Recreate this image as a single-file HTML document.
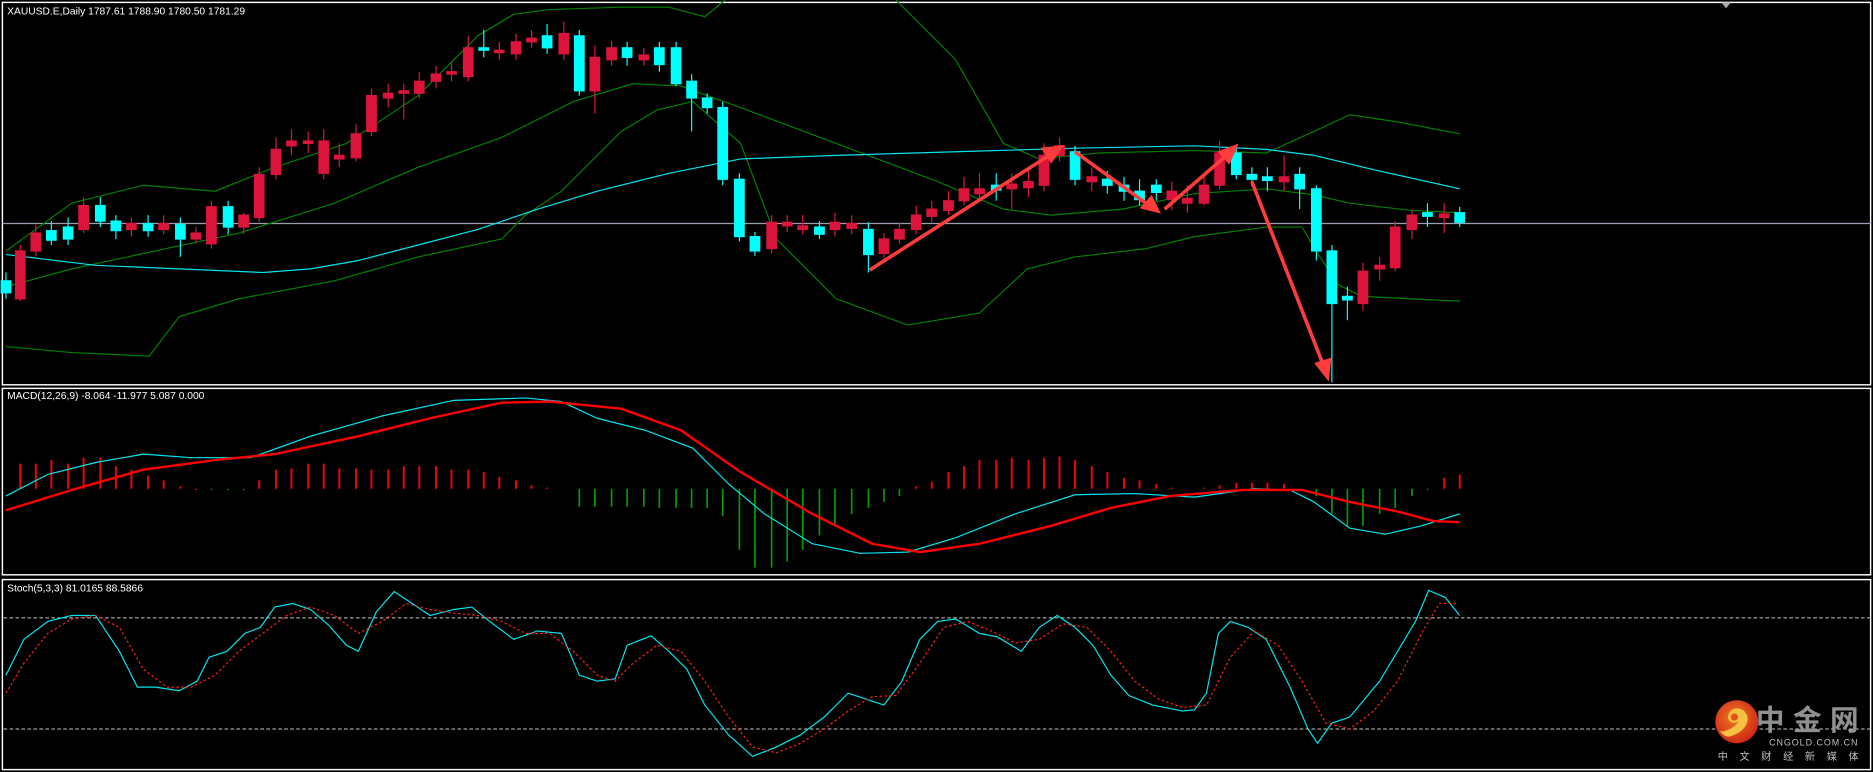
<!DOCTYPE html>
<html><head><meta charset="utf-8"><style>
html,body{margin:0;padding:0;background:#000;width:1873px;height:772px;overflow:hidden}
svg{display:block}
text{font-family:"Liberation Sans","Noto Sans CJK SC",sans-serif}
</style></head><body>
<svg width="1873" height="772" viewBox="0 0 1568 646" preserveAspectRatio="none" xmlns="http://www.w3.org/2000/svg">
<rect width="1568" height="646" fill="#000"/>
<!-- panel borders -->
<g fill="none" stroke="#fff" stroke-width="1.2">
<rect x="2" y="2" width="1564" height="320"/>
<rect x="2" y="325" width="1564" height="156"/>
<rect x="2" y="485" width="1564" height="159"/>
</g>
<path d="M1441 2 L1449 2 L1445 7Z" fill="#aaa"/>
<text x="6" y="12" font-size="8.6" fill="#fff">XAUUSD.E,Daily  1787.61 1788.90 1780.50 1781.29</text>
<!-- gray line -->
<line x1="2" y1="187" x2="1566" y2="187" stroke="#9aa0b0" stroke-width="1"/>
<!-- bollinger -->
<g fill="none" stroke="#008000" stroke-width="1">
<path d="M5 210 L60 170 L120 155 L180 160 L230 140 L290 120 L350 80 L400 30 L430 12 L460 8 L520 6 L560 6 L590 14 L607 0"/>
<path d="M750 0 L800 50 L840 120 L870 133 L920 128 L1000 126 L1060 128 L1100 110 L1130 96 L1170 102 L1222 112"/>
<path d="M5 240 L60 225 L130 210 L200 195 L280 170 L350 140 L420 115 L480 85 L530 70 L570 72 L620 90 L700 120 L780 150 L840 175 L880 180 L940 175 L1000 162 L1060 158 L1100 163 L1130 170 L1180 176 L1222 178"/>
<path d="M5 290 L60 295 L125 298 L150 265 L200 250 L280 235 L350 215 L420 200 L440 180 L470 160 L520 110 L550 92 L580 85 L620 120 L650 200 L700 250 L760 272 L820 262 L860 225 L900 215 L960 208 L1000 198 L1060 190 L1090 190 L1105 215 L1120 238 L1140 248 L1222 252"/>
</g>
<path d="M5 213 L80 222 L150 225 L220 228 L260 225 L300 218 L350 205 L400 192 L450 175 L500 160 L560 145 L620 133 L700 130 L800 127 L900 124 L1000 122 L1060 125 L1100 130 L1150 142 L1222 158" fill="none" stroke="#00e5ee" stroke-width="1"/>
<!-- candles -->
<g id="c"></g>
<g stroke-width="1">
<g stroke="#00ffff" fill="#00ffff">
<path d="M5 228V250M43 185V205M57 182V205M84 165V190M97 180V200M124 180V198M151 182V215M191 168V196M405 25V48M458 20V45M485 25V80M525 35V55M552 35V60M566 35V72M579 62V110M592 78V95M605 85V155M619 145V202M632 194V214M686 185V200M727 186V228M834 145V168M900 122V155M927 143V162M941 148V168M954 150V172M968 150V168M1035 122V150M1048 140V156M1061 140V160M1088 140V175M1102 155V218M1115 205V320M1128 240V268M1195 170V190M1222 173V190"/>
<rect x="1" y="235" width="8" height="10"/><rect x="39" y="193" width="8" height="8"/><rect x="53" y="190" width="8" height="10"/><rect x="80" y="172" width="8" height="13"/><rect x="93" y="185" width="8" height="8"/><rect x="120" y="187" width="8" height="6"/><rect x="147" y="188" width="8" height="12"/><rect x="187" y="173" width="8" height="17"/><rect x="401" y="40" width="8" height="2"/><rect x="454" y="30" width="8" height="10"/><rect x="481" y="30" width="8" height="46"/><rect x="521" y="40" width="8" height="8"/><rect x="548" y="40" width="8" height="14"/><rect x="562" y="40" width="8" height="30"/><rect x="575" y="68" width="8" height="14"/><rect x="588" y="82" width="8" height="8"/><rect x="601" y="90" width="8" height="60"/><rect x="615" y="150" width="8" height="48"/><rect x="628" y="198" width="8" height="12"/><rect x="682" y="190" width="8" height="6"/><rect x="723" y="192" width="8" height="21"/><rect x="830" y="155" width="8" height="4"/><rect x="896" y="127" width="8" height="23"/><rect x="923" y="150" width="8" height="5"/><rect x="937" y="155" width="8" height="5"/><rect x="950" y="160" width="8" height="7"/><rect x="964" y="155" width="8" height="6"/><rect x="1031" y="128" width="8" height="18"/><rect x="1044" y="146" width="8" height="4"/><rect x="1057" y="148" width="8" height="3"/><rect x="1084" y="146" width="8" height="12"/><rect x="1098" y="158" width="8" height="52"/><rect x="1111" y="210" width="8" height="44"/><rect x="1124" y="248" width="8" height="3"/><rect x="1191" y="178" width="8" height="3"/><rect x="1218" y="178" width="8" height="8"/>
</g>
<g stroke="#dc143c" fill="#dc143c">
<path d="M17 205V252M30 188V214M70 165V195M110 182V198M137 180V196M164 190V204M177 168V208M204 178V196M217 140V186M231 115V150M244 108V130M258 110V128M271 108V150M284 120V140M298 104V135M311 74V114M325 70V90M338 70V100M351 60V82M365 55V74M378 52V68M392 30V68M418 35V50M432 28V50M445 25V40M472 18V50M498 38V95M512 34V55M539 40V55M646 180V212M659 180V194M672 180V196M699 178V198M713 180V196M740 195V216M753 186V204M767 172V196M780 168V186M794 160V180M807 148V172M820 145V166M847 145V175M861 140V165M874 120V160M887 115V135M914 140V160M981 152V176M994 155V178M1008 145V172M1021 118V158M1075 130V160M1141 220V260M1155 215V235M1168 185V227M1182 175V200M1209 170V195"/>
<rect x="13" y="210" width="8" height="40"/><rect x="26" y="195" width="8" height="15"/><rect x="66" y="172" width="8" height="20"/><rect x="106" y="187" width="8" height="5"/><rect x="133" y="187" width="8" height="5"/><rect x="160" y="195" width="8" height="5"/><rect x="173" y="173" width="8" height="31"/><rect x="200" y="180" width="8" height="10"/><rect x="213" y="146" width="8" height="36"/><rect x="227" y="125" width="8" height="21"/><rect x="240" y="118" width="8" height="4"/><rect x="254" y="118" width="8" height="2"/><rect x="267" y="118" width="8" height="27"/><rect x="280" y="130" width="8" height="3"/><rect x="294" y="112" width="8" height="20"/><rect x="307" y="80" width="8" height="30"/><rect x="321" y="78" width="8" height="4"/><rect x="334" y="76" width="8" height="2"/><rect x="347" y="68" width="8" height="10"/><rect x="361" y="62" width="8" height="6"/><rect x="374" y="60" width="8" height="2"/><rect x="388" y="40" width="8" height="24"/><rect x="414" y="42" width="8" height="2"/><rect x="428" y="35" width="8" height="10"/><rect x="441" y="32" width="8" height="3"/><rect x="468" y="28" width="8" height="17"/><rect x="494" y="48" width="8" height="28"/><rect x="508" y="40" width="8" height="10"/><rect x="535" y="46" width="8" height="4"/><rect x="642" y="186" width="8" height="22"/><rect x="655" y="186" width="8" height="3"/><rect x="668" y="189" width="8" height="3"/><rect x="695" y="186" width="8" height="6"/><rect x="709" y="187" width="8" height="4"/><rect x="736" y="200" width="8" height="12"/><rect x="749" y="192" width="8" height="8"/><rect x="763" y="180" width="8" height="12"/><rect x="776" y="175" width="8" height="6"/><rect x="790" y="168" width="8" height="8"/><rect x="803" y="158" width="8" height="10"/><rect x="816" y="158" width="8" height="4"/><rect x="843" y="154" width="8" height="4"/><rect x="857" y="152" width="8" height="5"/><rect x="870" y="130" width="8" height="25"/><rect x="883" y="122" width="8" height="8"/><rect x="910" y="148" width="8" height="4"/><rect x="977" y="160" width="8" height="7"/><rect x="990" y="166" width="8" height="4"/><rect x="1004" y="155" width="8" height="15"/><rect x="1017" y="128" width="8" height="27"/><rect x="1071" y="148" width="8" height="4"/><rect x="1137" y="227" width="8" height="27"/><rect x="1151" y="222" width="8" height="3"/><rect x="1164" y="190" width="8" height="34"/><rect x="1178" y="180" width="8" height="12"/><rect x="1205" y="179" width="8" height="3"/>
</g>
</g>
<!-- arrows -->
<g stroke="#ff3c3c" stroke-width="3" fill="#ff3c3c">
<line x1="728" y1="226" x2="880" y2="129"/><path d="M890 122 L872 124 L880 136Z" stroke-width="1"/>
<line x1="900" y1="127" x2="962" y2="172"/><path d="M971 178 L955 174 L964 164Z" stroke-width="1"/>
<line x1="975" y1="175" x2="1028" y2="129"/><path d="M1036 121 L1020 127 L1029 137Z" stroke-width="1"/>
<line x1="1048" y1="152" x2="1108" y2="306"/><path d="M1112 318 L1101 304 L1114 300Z" stroke-width="1"/>
</g>
<!-- MACD -->
<text x="6" y="334" font-size="8.6" fill="#fff">MACD(12,26,9) -8.064 -11.977 5.087 0.000</text>
<path d="M17 409V388M30 409V388M43 409V385M57 409V388M70 409V383M84 409V383M97 409V390M110 409V393M124 409V398M137 409V402M151 409V407M164 409V410M217 409V402M231 409V393M244 409V392M258 409V388M271 409V388M284 409V392M298 409V392M311 409V393M325 409V393M338 409V390M351 409V390M365 409V390M378 409V393M392 409V393M405 409V395M418 409V399M432 409V402M445 409V406M458 409V408M767 409V407M780 409V403M794 409V395M807 409V390M820 409V385M834 409V385M847 409V383M861 409V385M874 409V383M887 409V382M900 409V385M914 409V390M927 409V395M941 409V400M954 409V402M968 409V405M981 409V408M1008 409V408M1021 409V406M1035 409V404M1048 409V404M1061 409V404M1075 409V405M1209 409V400M1222 409V397" stroke="#ff0000" stroke-width="1.6"/>
<path d="M177 409V410M191 409V410M204 409V410M485 409V424M498 409V424M512 409V424M525 409V424M539 409V424M552 409V425M566 409V425M579 409V425M592 409V425M605 409V432M619 409V460M632 409V475M646 409V475M659 409V470M672 409V460M686 409V448M699 409V440M713 409V430M727 409V425M740 409V420M753 409V415M1102 409V415M1115 409V430M1128 409V440M1141 409V440M1155 409V430M1168 409V425M1182 409V415M1195 409V410" stroke="#00a000" stroke-width="1.4"/>
<path d="M5 415 L40 397 L80 387 L120 380 L160 383 L210 383 L260 365 L320 348 L380 335 L440 333 L470 336 L500 350 L540 360 L580 375 L610 405 L640 430 L680 455 L720 463 L760 462 L800 450 L850 430 L900 414 L950 413 L1000 416 L1050 409 L1080 410 L1100 420 L1130 442 L1160 447 L1190 440 L1222 430" fill="none" stroke="#00e5ee" stroke-width="1"/>
<path d="M5 427 L60 410 L120 393 L180 385 L230 380 L300 365 L360 350 L420 337 L460 336 L520 342 L570 360 L620 395 L680 430 L730 455 L770 462 L820 455 L880 440 L930 425 L980 415 L1040 410 L1090 410 L1130 420 L1170 428 L1200 436 L1222 437" fill="none" stroke="#ff0000" stroke-width="2"/>
<!-- Stoch -->
<text x="6" y="495" font-size="8.6" fill="#fff">Stoch(5,3,3) 81.0165 88.5866</text>
<g stroke="#c8c8c8" stroke-width="0.8" stroke-dasharray="3,2"><line x1="3" y1="517" x2="1566" y2="517"/><line x1="3" y1="610" x2="1566" y2="610"/></g>
<path d="M5 565 L20 535 L40 520 L60 515 L80 515 L100 545 L115 575 L130 575 L150 578 L165 570 L175 550 L190 545 L205 530 L218 525 L230 508 L245 505 L260 510 L275 523 L290 540 L300 545 L315 512 L330 495 L345 505 L360 515 L380 510 L395 508 L410 520 L430 535 L450 528 L470 530 L485 565 L500 570 L515 568 L525 540 L545 532 L560 545 L575 560 L590 590 L610 615 L630 633 L650 625 L670 615 L690 600 L710 580 L725 585 L740 590 L755 570 L770 535 L785 520 L800 518 L820 530 L835 533 L855 545 L870 525 L885 515 L900 525 L915 540 L930 565 L945 582 L965 590 L990 595 L1000 594 L1010 580 L1020 530 L1030 520 L1045 525 L1060 535 L1080 575 L1095 610 L1103 622 L1115 605 L1130 600 L1155 570 L1170 545 L1185 520 L1196 494 L1210 500 L1222 515" fill="none" stroke="#00e5ee" stroke-width="1"/>
<path d="M5 580 L20 555 L40 530 L60 518 L80 515 L100 525 L120 560 L140 575 L160 575 L180 565 L200 545 L220 530 L240 515 L260 508 L280 515 L300 530 L320 520 L340 505 L360 510 L380 513 L400 515 L420 520 L440 530 L460 530 L480 545 L500 565 L515 570 L530 555 L550 540 L570 545 L590 570 L610 600 L630 625 L650 630 L670 622 L690 610 L710 595 L730 583 L750 582 L770 555 L790 525 L810 520 L830 528 L850 538 L870 535 L890 522 L910 525 L930 545 L950 570 L970 585 L990 592 L1010 590 L1030 550 L1050 528 L1070 540 L1090 570 L1110 605 L1130 610 L1150 595 L1170 570 L1190 530 L1205 505 L1220 505" fill="none" stroke="#ff2020" stroke-width="1" stroke-dasharray="2,2"/>
<!-- logo -->
<defs><radialGradient id="g" cx="0.45" cy="0.4" r="0.6"><stop offset="0" stop-color="#f07a20"/><stop offset="1" stop-color="#d02818"/></radialGradient></defs>
<circle cx="1454" cy="604" r="18" fill="url(#g)"/>
<path d="M1449 616 C1462 612 1466 602 1461 596 C1457 591 1449 592 1447 598 C1445 604 1452 607 1456 603 C1452 609 1446 612 1440 612 C1443 616 1446 617 1449 616Z" fill="#f6c040"/>
<circle cx="1452" cy="600" r="3" fill="#e05020"/>
<text x="1470" y="611" font-size="24" font-weight="bold" fill="#909090" font-family="Noto Serif CJK SC, serif" textLength="86">中金网</text>
<text x="1481" y="624" font-size="7.5" fill="#c0c0c0" textLength="74">CNGOLD.COM.CN</text>
<text x="1438" y="636" font-size="8.5" fill="#c0c0c0" textLength="118">中 文 财 经 新 媒 体</text>
</svg>
</body></html>
